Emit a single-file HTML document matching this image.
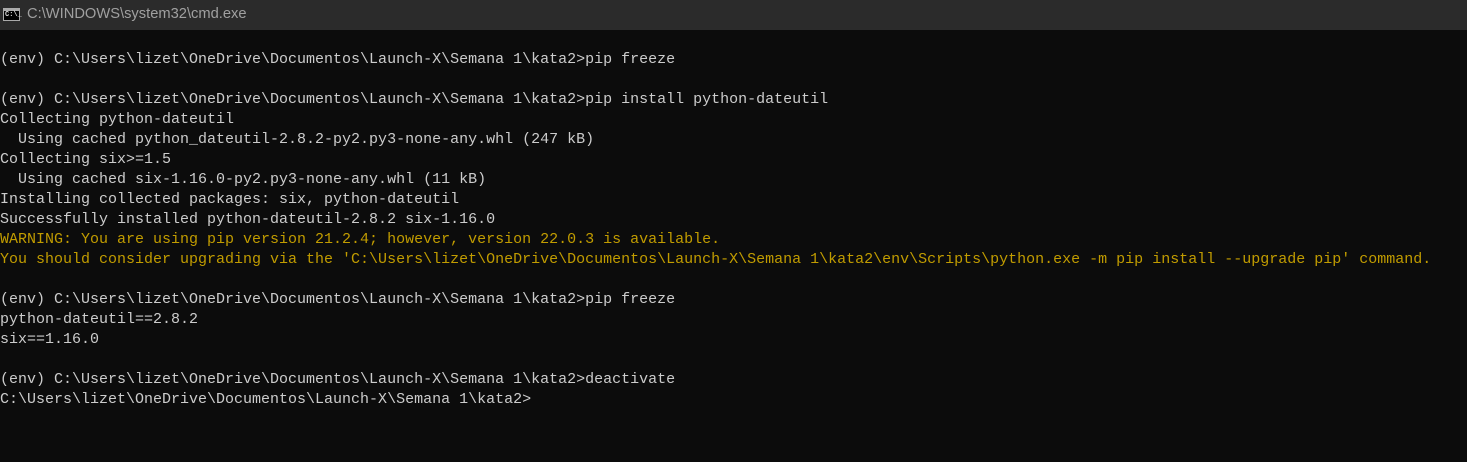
<!DOCTYPE html>
<html><head><meta charset="utf-8"><style>
html,body{margin:0;padding:0;width:1467px;height:462px;overflow:hidden;background:#0c0c0c;}
.tb{position:absolute;left:0;top:0;width:1467px;height:30px;background:#2b2b2b;}
.tb .t{position:absolute;left:27px;top:6px;font:14.7px "Liberation Sans",sans-serif;color:#a0a0a0;}
.ic{position:absolute;left:3px;top:8px;width:17px;height:13px;border:1px solid #aaa;box-sizing:border-box;background:#000;}
.ic:before{content:"";position:absolute;left:0;top:0;right:0;height:2px;background:#aaa;}
.ic span{position:absolute;left:1px;top:2px;font:bold 7px "Liberation Mono",monospace;color:#ddd;line-height:8px;}
pre{position:absolute;left:0;top:50px;margin:0;font:15px "Liberation Mono",monospace;line-height:20px;color:#cccccc;}
.w{color:#c19c00;}
</style></head><body>
<div class="tb"><div class="ic"><span>C:\_</span></div><div class="t">C:\WINDOWS\system32\cmd.exe</div></div>
<pre>(env) C:\Users\lizet\OneDrive\Documentos\Launch-X\Semana 1\kata2&gt;pip freeze

(env) C:\Users\lizet\OneDrive\Documentos\Launch-X\Semana 1\kata2&gt;pip install python-dateutil
Collecting python-dateutil
  Using cached python_dateutil-2.8.2-py2.py3-none-any.whl (247 kB)
Collecting six&gt;=1.5
  Using cached six-1.16.0-py2.py3-none-any.whl (11 kB)
Installing collected packages: six, python-dateutil
Successfully installed python-dateutil-2.8.2 six-1.16.0
<span class="w">WARNING: You are using pip version 21.2.4; however, version 22.0.3 is available.
You should consider upgrading via the 'C:\Users\lizet\OneDrive\Documentos\Launch-X\Semana 1\kata2\env\Scripts\python.exe -m pip install --upgrade pip' command.</span>

(env) C:\Users\lizet\OneDrive\Documentos\Launch-X\Semana 1\kata2&gt;pip freeze
python-dateutil==2.8.2
six==1.16.0

(env) C:\Users\lizet\OneDrive\Documentos\Launch-X\Semana 1\kata2&gt;deactivate
C:\Users\lizet\OneDrive\Documentos\Launch-X\Semana 1\kata2&gt;
</pre>
</body></html>
